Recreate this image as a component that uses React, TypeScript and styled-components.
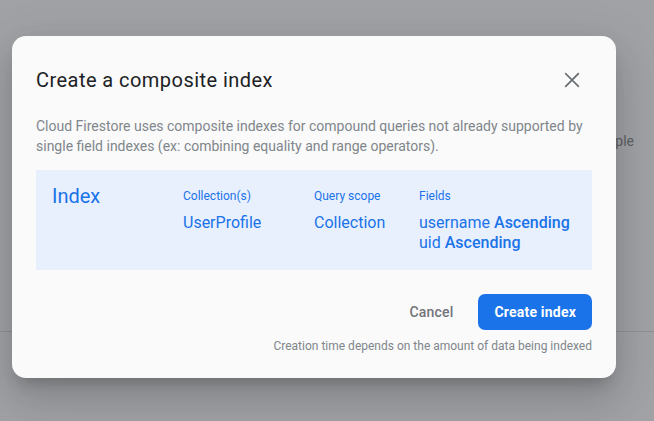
import React from "react";
import styled, { createGlobalStyle } from "styled-components";

const Global = createGlobalStyle`
  html, body { margin: 0; padding: 0; }
  body { font-family: Roboto, "Liberation Sans", Arial, sans-serif; background: #a0a2a6; }
`;

const Page = styled.div`
  position: relative;
  width: 654px;
  height: 421px;
  overflow: hidden;
  background: #a0a2a6;
`;

const Backdrop = styled.div`
  display: flex;
  flex-direction: column;
  height: 100%;
`;

const BackText = styled.div`
  padding: 131px 20px 0 0;
  height: 200px;
  text-align: right;
  font-size: 14px;
  line-height: 20px;
  color: #5f6164;
`;

const BackRule = styled.div`
  border-top: 1px solid #8f9195;
`;

const Dialog = styled.div`
  position: absolute;
  left: 12px;
  top: 36px;
  width: 604px;
  height: 342px;
  box-sizing: border-box;
  padding: 24px 24px 24px 24px;
  background: #fafafa;
  border-radius: 14px;
  box-shadow: 0 11px 15px -7px rgba(0, 0, 0, 0.2), 0 24px 38px 3px rgba(0, 0, 0, 0.1),
    0 9px 46px 8px rgba(0, 0, 0, 0.08);
  display: flex;
  flex-direction: column;
`;

const Header = styled.div`
  display: flex;
  align-items: center;
  justify-content: space-between;
  height: 40px;
  padding-right: 8px;
`;

const Title = styled.h2`
  margin: 0;
  font-family: Roboto, "Liberation Sans", sans-serif;
  font-weight: 400;
  font-size: 20px;
  color: #202124;
  letter-spacing: 0.45px;
`;

const CloseButton = styled.button`
  border: none;
  background: none;
  padding: 0;
  width: 24px;
  height: 24px;
  display: flex;
  color: #6a6e72;
  cursor: pointer;
`;

const Description = styled.p`
  margin: 16px 0 14px;
  font-size: 14px;
  line-height: 20px;
  color: #80868b;
`;

const IndexPanel = styled.div`
  display: grid;
  grid-template-columns: 131px 131px 105px 1fr;
  align-items: start;
  height: 100px;
  box-sizing: border-box;
  padding: 14px 16px;
  background: #e8f0fe;
  color: #1a73e8;
`;

const PanelTitle = styled.div`
  font-size: 20px;
  line-height: 24px;
`;

const Column = styled.div`
  display: flex;
  flex-direction: column;
  padding-top: 4px;
`;

const Label = styled.div`
  font-size: 12px;
  line-height: 16px;
`;

const Values = styled.div`
  margin-top: 9px;
  font-size: 16px;
  line-height: 20px;
`;

const Strong = styled.span`
  font-weight: 500;
`;

const Actions = styled.div`
  display: flex;
  justify-content: flex-end;
  gap: 9px;
  margin-top: 24px;
`;

const Button = styled.button<{ $primary?: boolean }>`
  height: 36px;
  padding: 0 16px;
  border: none;
  border-radius: 7px;
  font-family: Roboto, "Liberation Sans", sans-serif;
  font-size: 14px;
  font-weight: ${(p) => (p.$primary ? 700 : 500)};
  letter-spacing: 0.2px;
  cursor: pointer;
  background: ${(p) => (p.$primary ? "#1a73e8" : "transparent")};
  color: ${(p) => (p.$primary ? "#ffffff" : "#727579")};
`;

const Note = styled.div`
  margin-top: 8px;
  text-align: right;
  font-size: 12px;
  line-height: 16px;
  color: #80868b;
`;

export default function App() {
  return (
    <Page>
      <Global />
      <Backdrop>
        <BackText>Example</BackText>
        <BackRule />
      </Backdrop>
      <Dialog>
        <Header>
          <Title>Create a composite index</Title>
          <CloseButton aria-label="Close">
            <svg width="24" height="24" viewBox="0 0 24 24" fill="none" stroke="currentColor" strokeWidth="1.7" strokeLinecap="square">
              <path d="M5.8 5.8L18.2 18.2M18.2 5.8L5.8 18.2" />
            </svg>
          </CloseButton>
        </Header>
        <Description>
          Cloud Firestore uses composite indexes for compound queries not already supported by
          single field indexes (ex: combining equality and range operators).
        </Description>
        <IndexPanel>
          <PanelTitle>Index</PanelTitle>
          <Column>
            <Label>Collection(s)</Label>
            <Values>UserProfile</Values>
          </Column>
          <Column>
            <Label>Query scope</Label>
            <Values>Collection</Values>
          </Column>
          <Column>
            <Label>Fields</Label>
            <Values>
              <div>
                username <Strong>Ascending</Strong>
              </div>
              <div>
                uid <Strong>Ascending</Strong>
              </div>
            </Values>
          </Column>
        </IndexPanel>
        <Actions>
          <Button>Cancel</Button>
          <Button $primary>Create index</Button>
        </Actions>
        <Note>Creation time depends on the amount of data being indexed</Note>
      </Dialog>
    </Page>
  );
}
